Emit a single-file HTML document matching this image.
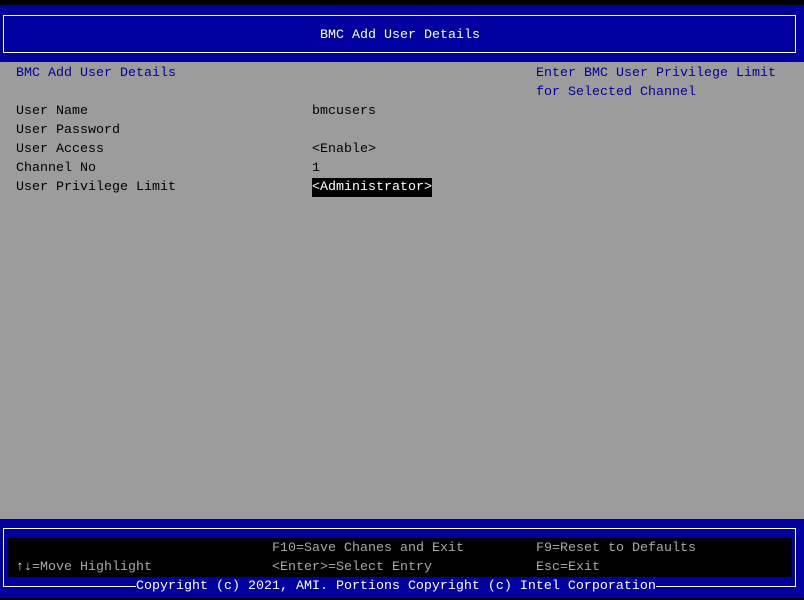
<!DOCTYPE html>
<html><head><style>
*{margin:0;padding:0}
body{width:804px;height:600px;background:#000;position:relative;overflow:hidden;font-family:"Liberation Mono","DejaVu Sans Mono",monospace;font-size:13.33px}
.a{position:absolute;white-space:pre;line-height:19px}
.top{position:absolute;left:0;top:5px;width:804px;height:57px;background:#0000a0}
.tb{position:absolute;left:3px;top:15px;width:791px;height:36px;border:1px solid #fff}
.mid{position:absolute;left:0;top:62px;width:804px;height:457px;background:#9c9c9c}
.bot{position:absolute;left:0;top:519px;width:804px;height:79px;background:#0000a0}
.bb{position:absolute;left:3px;top:528px;width:791px;height:57px;border:1px solid #fff}
.blk{position:absolute;left:8px;top:538px;width:784px;height:39px;background:#000}
.b{color:#0000a0}.k{color:#000}.g{color:#a8a8a8}.w{color:#fff}
</style></head><body>
<div class="top"></div><div class="tb"></div>
<div class="a w" style="left:320px;top:26px">BMC Add User Details</div>
<div class="mid"></div>
<div class="a b" style="left:16px;top:64px">BMC Add User Details</div>
<div class="a b" style="left:536px;top:64px">Enter BMC User Privilege Limit
for Selected Channel</div>
<div class="a k" style="left:16px;top:102px">User Name
User Password
User Access
Channel No
User Privilege Limit</div>
<div class="a k" style="left:312px;top:102px">bmcusers

&lt;Enable&gt;
1</div>
<div class="a w" style="left:312px;top:178px;background:#000;height:19px">&lt;Administrator&gt;</div>
<div class="bot"></div><div class="bb"></div><div class="blk"></div>
<div class="a g" style="left:272px;top:539px">F10=Save Chanes and Exit
&lt;Enter&gt;=Select Entry</div>
<div class="a g" style="left:536px;top:539px">F9=Reset to Defaults
Esc=Exit</div>
<div class="a g" style="left:16px;top:558px"><b style="color:#ddd">↑↓</b>=Move Highlight</div>
<div class="a w" style="left:136px;top:577px;background:#0000a0">Copyright (c) 2021, AMI. Portions Copyright (c) Intel Corporation</div>
</body></html>
